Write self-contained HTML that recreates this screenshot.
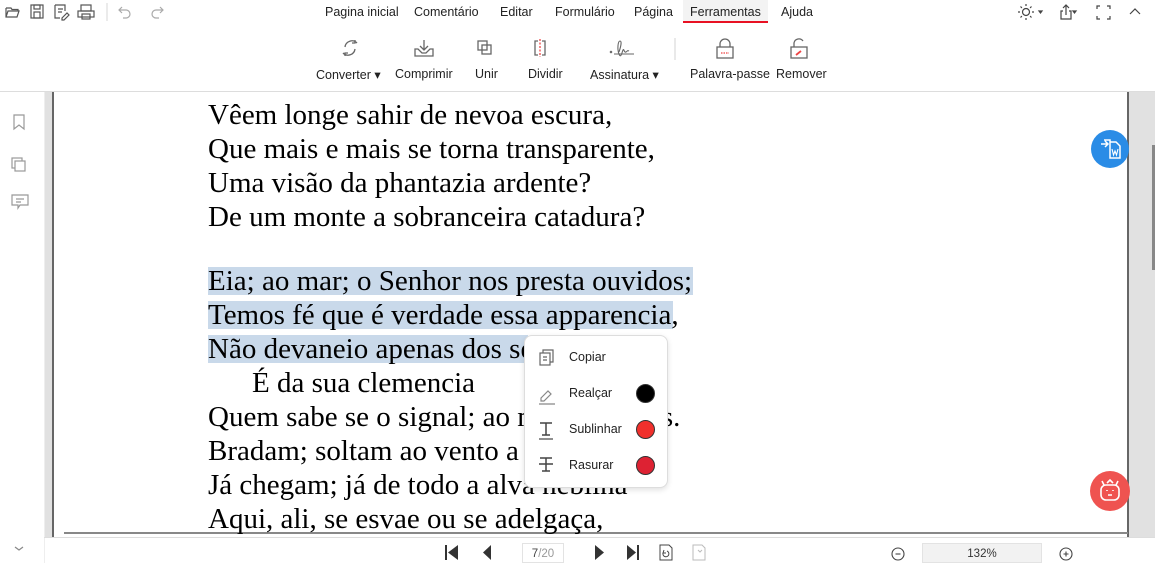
<!DOCTYPE html>
<html><head><meta charset="utf-8"><style>
*{margin:0;padding:0;box-sizing:border-box}
body{width:1155px;height:563px;overflow:hidden;background:#fff;font-family:"Liberation Sans",sans-serif;position:relative;color:#222}
.abs{position:absolute}
.tab{position:absolute;top:5px;font-size:12.5px;color:#222}
.lbl{position:absolute;top:67px;font-size:12.5px;color:#222;white-space:nowrap}
.ic{position:absolute}
.line{position:absolute;left:208px;font-family:"Liberation Serif",serif;font-size:29px;color:#000;white-space:nowrap;line-height:30px}
.hl{position:absolute;background:#c9d9ea}
.mi{position:absolute;left:569px;font-size:12.5px;color:#222}
.dot{position:absolute;left:636px;width:19px;height:19px;border-radius:50%;border:1px solid #333}
</style></head><body>
<svg class="ic" style="left:0;top:0" width="170" height="24" fill="none" stroke="#555" stroke-width="1.2">
<path d="M6 8h5l1 1.5h6v2M6 8v9h11l2-6H8l-2 6"/>
<rect x="31" y="5" width="12" height="13"/><rect x="34" y="5" width="6" height="4"/><rect x="34" y="12" width="6" height="6"/>
<path d="M55 5h10v6M55 5v13h5M58 9h5M58 12h4M62 18l5-5 2 2-5 5h-2z"/>
<rect x="78" y="11" width="16" height="6"/><rect x="81" y="5" width="10" height="6"/><rect x="82" y="14" width="8" height="5"/>
<path d="M107 3v18" stroke="#ddd"/>
<path d="M122 7l-3 3 3 3M119 10h7a4 4 0 010 8h-3" stroke="#aaa"/>
<path d="M160 7l3 3-3 3M163 10h-7a4 4 0 000 8h3" stroke="#aaa"/>
</svg>
<div class="tab" style="left:325px">Pagina inicial</div>
<div class="tab" style="left:414px">Comentário</div>
<div class="tab" style="left:500px">Editar</div>
<div class="tab" style="left:555px">Formulário</div>
<div class="tab" style="left:634px">Página</div>
<div class="abs" style="left:683px;top:0;width:85px;height:22px;background:#f3f3f3"></div>
<div class="tab" style="left:690px">Ferramentas</div>
<div class="abs" style="left:683px;top:21px;width:85px;height:2px;background:#e81123"></div>
<div class="tab" style="left:781px">Ajuda</div>
<svg class="ic" style="left:1010px;top:0" width="145" height="24" fill="none" stroke="#444" stroke-width="1.2">
<circle cx="16" cy="12" r="3.5"/><path d="M16 4v2M16 18v2M8 12h2M22 12h2M10.5 6.5l1.4 1.4M20.1 16.1l1.4 1.4M10.5 17.5l1.4-1.4M20.1 7.9l1.4-1.4"/>
<path d="M29 11l3 0-1.5 2z" fill="#444"/>
<path d="M53 11h-2v8h10v-8h-2M56 15V5M53 8l3-3 3 3"/><path d="M63 11h3l-1.5 2z" fill="#444"/>
<path d="M87 9V6h3M97 6h3v3M100 16v3h-3M90 19h-3v-3"/>
<path d="M120 14l5-5 5 5"/>
</svg>
<svg class="ic" style="left:330px;top:36px" width="500" height="28" fill="none" stroke="#666" stroke-width="1.3">
<path d="M27 7a7 7 0 00-12 4M13 17a7 7 0 0012-4M25 4v3h-3M15 20v-3h3"/>
<path d="M94 4v10M90 10l4 4 4-4M85 13l3 0 4 4h4l4-4h3v7H85z"/>
<rect x="148" y="5" width="9" height="9"/><rect x="152" y="9" width="9" height="9"/>
<path d="M208 5h-3v14h3M212 5h3v14h-3"/><path d="M210 3v18" stroke="#e44" stroke-dasharray="2 1.5"/>
<path d="M280 15l2 2M282 15l-2 2M284 18h20M289 16c2-6 3-11 1-11s-3 8-1 13 3-2 4-4 1 3 3 2 1-2 3-1" stroke-width="1.1"/>
<path d="M345 2v22" stroke="#ddd"/>
<path d="M390 11V8a5 5 0 0110 0v3"/><rect x="387" y="11" width="16" height="11"/><path d="M391 17h8" stroke="#e44" stroke-dasharray="1.5 1"/>
<path d="M464 11V7a5 5 0 019-2"/><rect x="461" y="11" width="16" height="11"/><path d="M466 19l5-4" stroke="#e44" stroke-width="1.8"/>
</svg>
<div class="lbl" style="left:316px">Converter ▾</div>
<div class="lbl" style="left:395px">Comprimir</div>
<div class="lbl" style="left:475px">Unir</div>
<div class="lbl" style="left:528px">Dividir</div>
<div class="lbl" style="left:590px">Assinatura ▾</div>
<div class="lbl" style="left:690px">Palavra-passe</div>
<div class="lbl" style="left:776px">Remover</div>
<div class="abs" style="left:0;top:91px;width:1155px;height:1px;background:#ddd"></div>
<svg class="ic" style="left:0;top:92px" width="44" height="470" fill="none" stroke="#999" stroke-width="1.2">
<path d="M14 23V37l5-4 5 4V23z"/>
<rect x="12" y="66" width="10" height="10"/><rect x="15" y="69" width="10" height="10" fill="#fff"/>
<path d="M12 103h16v10H20l-2 3v-3h-6z"/><path d="M16 107h8M16 110h5"/>
<path d="M15 455l4 3 4-3" stroke="#888"/>
</svg>
<div class="abs" style="left:44px;top:92px;width:1px;height:471px;background:#eee"></div>
<div class="abs" style="left:45px;top:92px;width:7px;height:445px;background:#e1e1e1"></div>
<div class="abs" style="left:52px;top:92px;width:2px;height:445px;background:#666"></div>
<div class="abs" style="left:1127px;top:92px;width:2px;height:445px;background:#666"></div>
<div class="abs" style="left:1129px;top:92px;width:26px;height:445px;background:#e1e1e1"></div>
<div class="abs" style="left:1152px;top:145px;width:3px;height:125px;background:#888"></div>
<div class="abs" style="left:64px;top:532px;width:1064px;height:2px;background:#888"></div>
<div class="abs" style="left:44px;top:537px;width:1111px;height:1px;background:#ddd"></div>
<div class="hl" style="left:208px;top:267px;width:485px;height:28px"></div>
<div class="hl" style="left:208px;top:301px;width:465px;height:28px"></div>
<div class="hl" style="left:208px;top:335px;width:320px;height:28px"></div>
<div class="line" style="top:100px">Vêem longe sahir de nevoa escura,</div>
<div class="line" style="top:134px">Que mais e mais se torna transparente,</div>
<div class="line" style="top:168px">Uma visão da phantazia ardente?</div>
<div class="line" style="top:202px">De um monte a sobranceira catadura?</div>
<div class="line" style="top:266px">Eia; ao mar; o Senhor nos presta ouvidos;</div>
<div class="line" style="top:300px">Temos fé que é verdade essa apparencia,</div>
<div class="line" style="top:334px">Não devaneio apenas dos sentidos.</div>
<div class="line" style="top:368px;left:252px">É da sua clemencia</div>
<div class="line" style="top:402px">Quem sabe se o signal; ao mar, aos ceus.</div>
<div class="line" style="top:436px">Bradam; soltam ao vento a lona branca,</div>
<div class="line" style="top:470px">Já chegam; já de todo a alva neblina</div>
<div class="line" style="top:504px">Aqui, ali, se esvae ou se adelgaça,</div>
<div class="abs" style="left:524px;top:335px;width:144px;height:153px;background:#fff;border:1px solid #ddd;border-radius:8px;box-shadow:0 2px 6px rgba(0,0,0,.12)"></div>
<svg class="ic" style="left:530px;top:340px" width="40" height="140" fill="none" stroke="#666" stroke-width="1.2">
<rect x="10" y="13" width="10" height="12"/><path d="M13 13v-3h10v12h-3M13 17h4M13 20h4"/>
<path d="M11 58l7-7 3 3-7 7h-3z M9 64h16" stroke="#888"/>
<path d="M10 83h12M16 83v12M12 95h8" stroke="#444" stroke-width="1.5"/><path d="M9 99h14" stroke="#444"/>
<path d="M10 118h12M16 118v13M12 131h8M9 124h14" stroke="#444" stroke-width="1.5"/>
</svg>
<div class="mi" style="top:350px">Copiar</div>
<div class="mi" style="top:386px">Realçar</div>
<div class="mi" style="top:422px">Sublinhar</div>
<div class="mi" style="top:458px">Rasurar</div>
<div class="dot" style="top:384px;background:#000"></div>
<div class="dot" style="top:420px;background:#f0302c"></div>
<div class="dot" style="top:456px;background:#dd2233"></div>
<div class="abs" style="left:1091px;top:130px;width:38px;height:38px;border-radius:50%;background:#2a8ce6"></div>
<svg class="ic" style="left:1091px;top:130px" width="38" height="38" fill="none" stroke="#fff" stroke-width="1.5">
<path d="M10 14h7M14 11l3 3-3 3M13 10h6v4M19 20v-8h6l4 4v12H19z"/><path d="M21 19l1.5 6 1.5-4 1.5 4 1.5-6" stroke-width="1.1"/>
</svg>
<div class="abs" style="left:1090px;top:471px;width:40px;height:40px;border-radius:50%;background:#ef5350"></div>
<svg class="ic" style="left:1090px;top:471px" width="40" height="40" fill="none" stroke="#fff" stroke-width="1.6">
<rect x="11" y="14" width="18" height="15" rx="5"/><path d="M14 14l-2-4M26 14l2-4M17 12l3-3 3 3M17 19v1M23 19v1M18 24h4"/>
</svg>
<svg class="ic" style="left:430px;top:540px" width="300" height="24" fill="#333">
<rect x="15" y="5" width="2" height="15"/><path d="M28 5v15l-10-7.5z"/>
<path d="M61 5v15l-8-7.5z"/>
<path d="M165 5v15l9-7.5z"/><path d="M197 5v15l9-7.5z"/><rect x="207" y="5" width="2" height="15"/>
<g fill="none" stroke="#444"><path d="M230 5h9l3 3v12h-12z"/><path d="M234 10l-1 3 3 0M233 13a3 3 0 104-2"/></g>
<g fill="none" stroke="#bbb"><path d="M263 5h9l3 3v12h-12z M268 10l2 2 2-2"/></g>
</svg>
<div class="abs" style="left:522px;top:543px;width:42px;height:20px;border:1px solid #e3e3e3;font-size:11.5px;text-align:center;line-height:20px;color:#444">7<span style="color:#999">/20</span></div>
<svg class="ic" style="left:888px;top:544px" width="190" height="19" fill="none" stroke="#444" stroke-width="1.1">
<circle cx="10" cy="10" r="6"/><path d="M7.5 10h5"/>
<circle cx="178" cy="10" r="6"/><path d="M175.5 10h5M178 7.5v5"/>
</svg>
<div class="abs" style="left:922px;top:543px;width:120px;height:20px;background:#f2f2f2;border:1px solid #e3e3e3;font-size:11.5px;text-align:center;line-height:20px;color:#333">132%</div>
</body></html>
